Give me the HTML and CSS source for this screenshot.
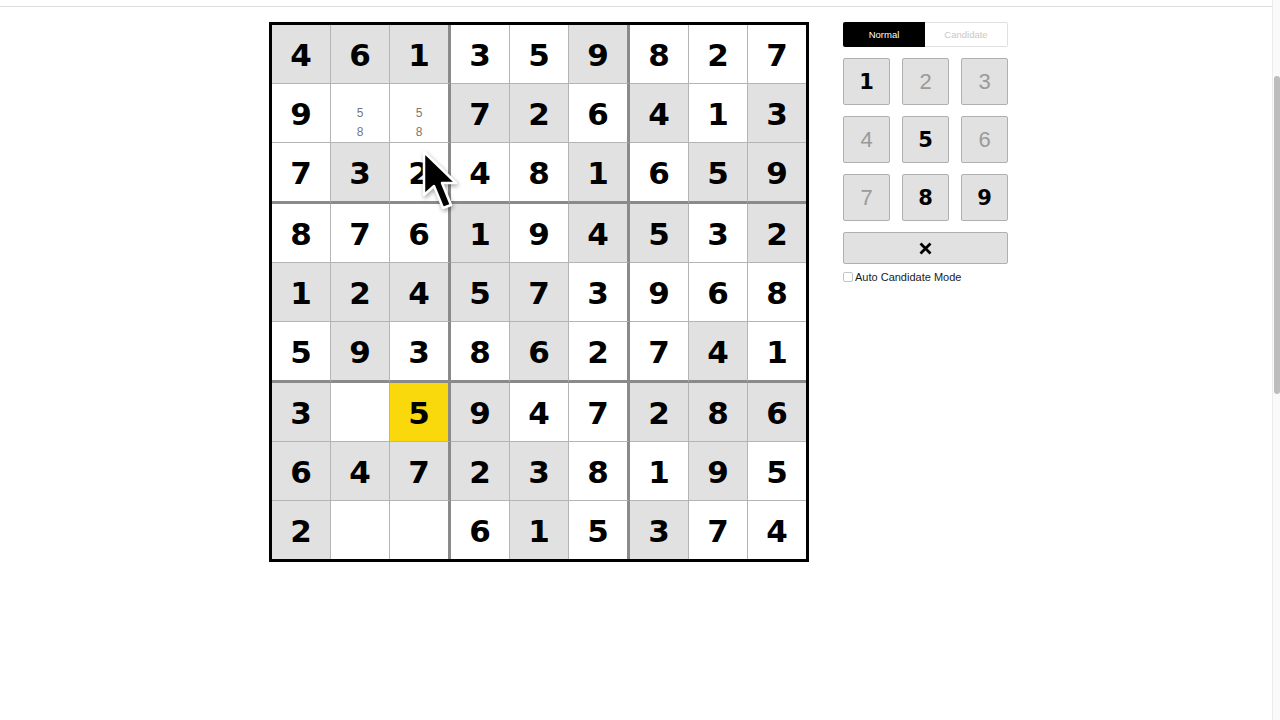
FILE: index.html
```html
<!DOCTYPE html>
<html>
<head>
<meta charset="utf-8">
<link rel="stylesheet" href="styles.css">
</head>
<body>
<div class="window">
  <div class="page">
    <div class="topbar"></div>
    <div class="main">
      <div class="board-wrap">
        <div class="board">
          <div class="cell g">4</div><div class="cell g">6</div><div class="cell g bx">1</div><div class="cell">3</div><div class="cell">5</div><div class="cell g bx">9</div><div class="cell">8</div><div class="cell">2</div><div class="cell lc">7</div>
          <div class="cell">9</div><div class="cell cand"><span class="c5">5</span><span class="c8">8</span></div><div class="cell cand bx"><span class="c5">5</span><span class="c8">8</span></div><div class="cell g">7</div><div class="cell g">2</div><div class="cell bx">6</div><div class="cell g">4</div><div class="cell">1</div><div class="cell g lc">3</div>
          <div class="cell by">7</div><div class="cell g by">3</div><div class="cell by bx">2</div><div class="cell by">4</div><div class="cell by">8</div><div class="cell g by bx">1</div><div class="cell by">6</div><div class="cell g by">5</div><div class="cell g by lc">9</div>
          <div class="cell">8</div><div class="cell">7</div><div class="cell bx">6</div><div class="cell g">1</div><div class="cell">9</div><div class="cell g bx">4</div><div class="cell g">5</div><div class="cell">3</div><div class="cell g lc">2</div>
          <div class="cell g">1</div><div class="cell g">2</div><div class="cell g bx">4</div><div class="cell g">5</div><div class="cell g">7</div><div class="cell bx">3</div><div class="cell">9</div><div class="cell">6</div><div class="cell lc">8</div>
          <div class="cell by">5</div><div class="cell g by">9</div><div class="cell by bx">3</div><div class="cell by">8</div><div class="cell g by">6</div><div class="cell by bx">2</div><div class="cell by">7</div><div class="cell g by">4</div><div class="cell by lc">1</div>
          <div class="cell g">3</div><div class="cell"></div><div class="cell sel bx">5</div><div class="cell g">9</div><div class="cell">4</div><div class="cell bx">7</div><div class="cell g">2</div><div class="cell g">8</div><div class="cell g lc">6</div>
          <div class="cell g">6</div><div class="cell g">4</div><div class="cell g bx">7</div><div class="cell g">2</div><div class="cell g">3</div><div class="cell bx">8</div><div class="cell">1</div><div class="cell g">9</div><div class="cell lc">5</div>
          <div class="cell g lr">2</div><div class="cell lr"></div><div class="cell lr bx"></div><div class="cell lr">6</div><div class="cell g lr">1</div><div class="cell lr bx">5</div><div class="cell g lr">3</div><div class="cell lr">7</div><div class="cell lr lc">4</div>
        </div>
        <svg class="cursor" width="40" height="66" viewBox="-3 -3 40 66">
          <path d="M0 0 L0 43 L10 34 L19 56 L27 53 L18 31 L32 31 Z" fill="#000" stroke="#fff" stroke-width="2.5" stroke-linejoin="round"/>
        </svg>
      </div>
      <div class="panel">
        <div class="modes">
          <div class="mode on">Normal</div>
          <div class="mode off">Candidate</div>
        </div>
        <div class="keys">
          <div class="key en">1</div>
          <div class="key">2</div>
          <div class="key">3</div>
          <div class="key">4</div>
          <div class="key en">5</div>
          <div class="key">6</div>
          <div class="key">7</div>
          <div class="key en">8</div>
          <div class="key en">9</div>
        </div>
        <div class="erase">
          <svg width="13" height="13" viewBox="0 0 13 13"><path d="M1.5 1.5 L11.5 11.5 M11.5 1.5 L1.5 11.5" stroke="#000" stroke-width="2.8" stroke-linecap="butt"/></svg>
        </div>
        <label class="auto"><span class="box"></span><span class="auto-text">Auto Candidate Mode</span></label>
      </div>
    </div>
  </div>
  <div class="scrollbar"><div class="thumb"></div></div>
</div>
</body>
</html>
```

FILE: styles.css
```css
html, body {
  margin: 0;
  padding: 0;
  background: #fff;
  overflow: hidden;
}
.window {
  display: flex;
  width: 1280px;
  height: 720px;
}
.page {
  flex: 1;
  display: flex;
  flex-direction: column;
}
.topbar {
  height: 6px;
  border-bottom: 1px solid #dcdcdc;
}
.main {
  display: flex;
  align-items: flex-start;
  gap: 34px;
  padding-top: 15px;
  padding-left: 269px;
}
.board-wrap {
  position: relative;
}
.board {
  display: grid;
  grid-template-columns: repeat(9, auto);
  border: 3px solid #000;
  width: max-content;
}
.cell {
  width: 58px;
  height: 55px;
  padding-top: 3px;
  box-sizing: content-box;
  border-right: 1px solid #b4b4b4;
  border-bottom: 1px solid #b4b4b4;
  background: #fff;
  display: flex;
  align-items: center;
  justify-content: center;
  font-family: "DejaVu Sans", sans-serif;
  font-weight: bold;
  font-size: 31px;
  color: #000;
  line-height: 1;
}
.cell.g { background: #e1e1e1; }
.cell.sel { background: #f9d90c; }
.cell.bx { border-right: 3px solid #8a8a8a; }
.cell.by { border-bottom: 3px solid #8a8a8a; }
.cell.lc { border-right: none; }
.cell.lr { border-bottom: none; }
.cell.cand {
  height: 58px;
  padding-top: 0;
  display: grid;
  grid-template-rows: repeat(3, 1fr);
  grid-template-columns: repeat(3, 1fr);
  font-family: "Liberation Sans", Arial, sans-serif;
  font-weight: normal;
  font-size: 12px;
  color: #777;
}
.cand span {
  display: flex;
  align-items: center;
  justify-content: center;
}
.cand .c5 { grid-row: 2; grid-column: 2; }
.cand .c8 { grid-row: 3; grid-column: 2; }
.cursor {
  position: absolute;
  left: 152px;
  top: 127px;
  filter: drop-shadow(1px 2px 2px rgba(0,0,0,0.35));
}
.panel {
  width: 165px;
  display: flex;
  flex-direction: column;
}
.modes {
  display: flex;
  height: 25px;
}
.mode {
  flex: 1;
  display: flex;
  align-items: center;
  justify-content: center;
  font-family: "Liberation Sans", Arial, sans-serif;
  font-size: 9.5px;
  box-sizing: border-box;
}
.mode.on {
  background: #000;
  color: #fff;
  border-radius: 2px 0 0 2px;
}
.mode.off {
  background: #fff;
  color: #c8c8c8;
  border: 1px solid #e0e0e0;
  border-left: none;
  border-radius: 0 2px 2px 0;
}
.keys {
  margin-top: 11px;
  display: grid;
  grid-template-columns: repeat(3, 47px);
  grid-auto-rows: 47px;
  column-gap: 12px;
  row-gap: 11px;
}
.key {
  box-sizing: border-box;
  background: #e1e1e1;
  border: 1px solid #b0b0b0;
  border-radius: 2px;
  display: flex;
  align-items: center;
  justify-content: center;
  font-family: "Liberation Sans", Arial, sans-serif;
  font-size: 22px;
  color: #9a9a9a;
}
.key.en {
  font-family: "DejaVu Sans", sans-serif;
  font-weight: bold;
  font-size: 21px;
  color: #000;
}
.erase {
  margin-top: 11px;
  height: 32px;
  box-sizing: border-box;
  background: #e1e1e1;
  border: 1px solid #b0b0b0;
  border-radius: 2px;
  display: flex;
  align-items: center;
  justify-content: center;
}
.auto {
  margin-top: 7px;
  display: flex;
  align-items: center;
  gap: 2px;
  font-family: "Liberation Sans", Arial, sans-serif;
  font-size: 11px;
  color: #1a1a1a;
}
.box {
  width: 8px;
  height: 8px;
  border: 1px solid #c4c4c4;
  border-radius: 2px;
  background: #fff;
}
.scrollbar {
  width: 8px;
  height: 720px;
  background: #fafafa;
  border-left: 1px solid #ececec;
  display: flex;
  flex-direction: column;
  padding-top: 76px;
  box-sizing: border-box;
  align-items: center;
}
.thumb {
  width: 6px;
  height: 318px;
  background: #bdbdbd;
  border-radius: 3px;
}
```
